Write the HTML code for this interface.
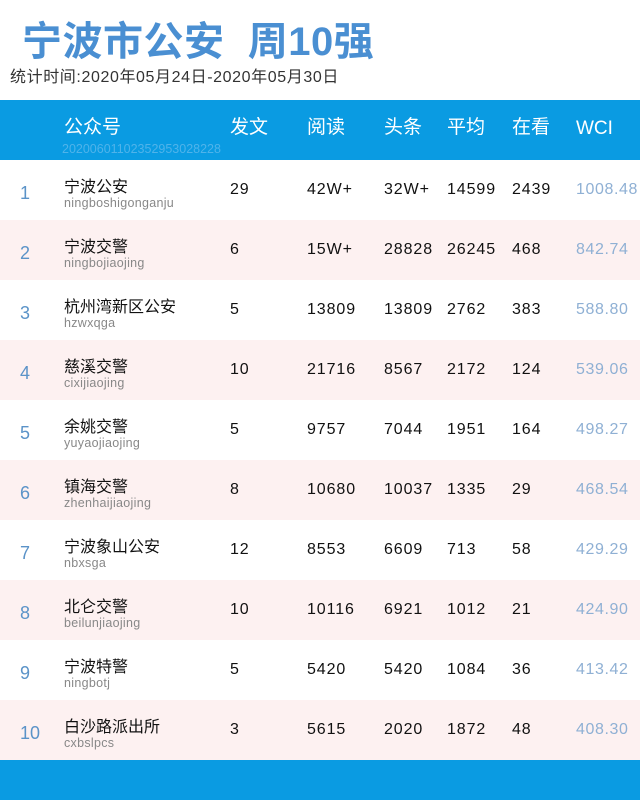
<!DOCTYPE html>
<html><head><meta charset="utf-8"><style>
*{margin:0;padding:0;box-sizing:border-box}
body{width:640px;height:800px;background:#fff;position:relative;overflow:hidden;font-family:"Liberation Sans","Noto Sans CJK SC",sans-serif}
.a{position:absolute;white-space:nowrap}
.t{left:22px;top:9px;font-size:40px;font-weight:bold;color:#4a8fd2;letter-spacing:0.5px}
.s{left:10px;top:63px;font-size:16px;color:#333;letter-spacing:0.6px}
.hd{left:0;top:100px;width:640px;height:60px;background:#0a9be2}
.h{top:115px;font-size:19px;color:#fff;line-height:26px}
.id{left:62px;top:142px;font-size:12.5px;color:#4fb3ea}
.row{left:0;width:640px;height:60px}
.c{font-size:16px;color:#111;letter-spacing:0.9px}
.r{font-size:18px;color:#5b93c8}
.w{font-size:16px;color:#8fb0d4;letter-spacing:0.6px}
.n{font-size:16px;color:#111}
.p{font-size:12.5px;color:#888;letter-spacing:0.3px}
.ft{left:0;top:760px;width:640px;height:40px;background:#0a9be2}
</style></head><body>
<div class="a t">宁波市公安&nbsp;&nbsp;周10强</div>
<div class="a s">统计时间:2020年05月24日-2020年05月30日</div>
<div class="a hd"></div>
<div class="a h" style="left:64px">公众号</div>
<div class="a h" style="left:230px">发文</div>
<div class="a h" style="left:307px">阅读</div>
<div class="a h" style="left:384px">头条</div>
<div class="a h" style="left:447px">平均</div>
<div class="a h" style="left:512px">在看</div>
<div class="a h" style="left:576px;top:116px;font-size:19px">WCI</div>
<div class="a id">20200601102352953028228</div>
<div id="rows"></div>
<div class="a ft"></div>
<script>
var d=[["1","宁波公安","ningboshigonganju","29","42W+","32W+","14599","2439","1008.48"],
["2","宁波交警","ningbojiaojing","6","15W+","28828","26245","468","842.74"],
["3","杭州湾新区公安","hzwxqga","5","13809","13809","2762","383","588.80"],
["4","慈溪交警","cixijiaojing","10","21716","8567","2172","124","539.06"],
["5","余姚交警","yuyaojiaojing","5","9757","7044","1951","164","498.27"],
["6","镇海交警","zhenhaijiaojing","8","10680","10037","1335","29","468.54"],
["7","宁波象山公安","nbxsga","12","8553","6609","713","58","429.29"],
["8","北仑交警","beilunjiaojing","10","10116","6921","1012","21","424.90"],
["9","宁波特警","ningbotj","5","5420","5420","1084","36","413.42"],
["10","白沙路派出所","cxbslpcs","3","5615","2020","1872","48","408.30"]];
var h="",xs=[230,307,384,447,512];
d.forEach(function(r,i){var y=160+i*60;
h+='<div class="a row" style="top:'+y+'px;background:'+(i%2?'#fdf1f1':'#fff')+'"></div>';
h+='<div class="a r" style="left:20px;top:'+(y+23)+'px">'+r[0]+'</div>';
h+='<div class="a n" style="left:64px;top:'+(y+13)+'px">'+r[1]+'</div>';
h+='<div class="a p" style="left:64px;top:'+(y+36)+'px">'+r[2]+'</div>';
for(var k=0;k<5;k++)h+='<div class="a c" style="left:'+xs[k]+'px;top:'+(y+21)+'px">'+r[3+k]+'</div>';
h+='<div class="a w" style="left:576px;top:'+(y+21)+'px">'+r[8]+'</div>';});
document.getElementById("rows").innerHTML=h;
</script>
</body></html>
